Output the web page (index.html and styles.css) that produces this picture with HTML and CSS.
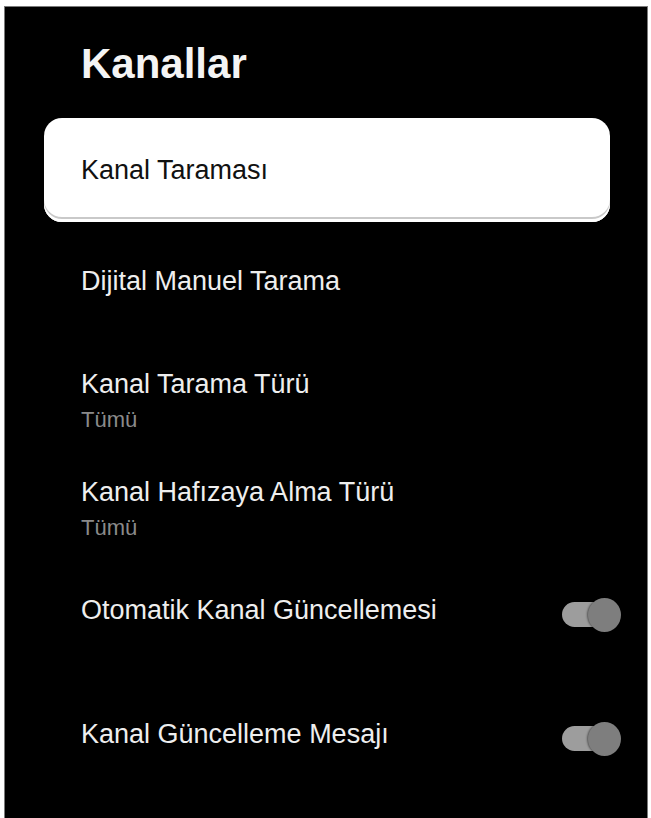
FILE: index.html
```html
<!DOCTYPE html>
<html lang="tr">
<head>
    <meta charset="UTF-8">
    <meta name="viewport" content="width=device-width, initial-scale=1.0">
    <title>Kanallar</title>
    <link rel="stylesheet" href="styles.css">
</head>
<body>
    <div class="panel">
        <h1 class="title">Kanallar</h1>

        <div class="card">
            <span class="label">Kanal Taraması</span>
        </div>

        <div class="row row-dijital">
            <span class="label">Dijital Manuel Tarama</span>
        </div>

        <div class="row row-tarama">
            <div class="text">
                <span class="label">Kanal Tarama Türü</span>
                <span class="sub">Tümü</span>
            </div>
        </div>

        <div class="row row-hafiza">
            <div class="text">
                <span class="label">Kanal Hafızaya Alma Türü</span>
                <span class="sub">Tümü</span>
            </div>
        </div>

        <div class="row row-otomatik">
            <span class="label">Otomatik Kanal Güncellemesi</span>
            <div class="toggle"><span class="track"></span><span class="knob"></span></div>
        </div>

        <div class="row row-mesaj">
            <span class="label">Kanal Güncelleme Mesajı</span>
            <div class="toggle"><span class="track"></span><span class="knob"></span></div>
        </div>
    </div>
</body>
</html>
```

FILE: styles.css
```css
* {
    box-sizing: border-box;
}

body {
    margin: 0;
    height: 818px;
    overflow: hidden;
    background: #fff;
    font-family: "Liberation Sans", Arial, sans-serif;
}

.panel {
    margin: 6px 0 0 4px;
    width: 644px;
    height: 812px;
    padding: 33px 37px 0 39px;
    background: #000;
    border: 1px solid #7a7a7a;
    border-bottom: none;
}

.title {
    margin: 0 0 30px;
    padding-left: 37px;
    height: 48px;
    font-size: 42px;
    line-height: 48px;
    font-weight: bold;
    color: #f4f4f4;
}

.card {
    display: flex;
    align-items: center;
    height: 104px;
    padding-left: 37px;
    background: #fff;
    border-radius: 18px;
    box-shadow: inset 0 -3px 0 #fff, inset 0 -5px 0 #c9c9c9;
}

.label {
    display: block;
    font-size: 27px;
    line-height: 30px;
    color: #eeeeee;
}

.card .label {
    color: #111;
}

.sub {
    display: block;
    margin-top: 8px;
    font-size: 22px;
    line-height: 26px;
    color: #8a8a8a;
}

.row {
    display: flex;
    align-items: center;
    justify-content: space-between;
    padding-left: 37px;
}

.row-dijital { height: 118px; }
.row-tarama { height: 122px; }
.row-hafiza { height: 94px; }
.row-otomatik { height: 108px; }
.row-mesaj { height: 140px; }

.toggle {
    position: relative;
    width: 59px;
    height: 33px;
    margin: 8px -11px 0 0;
    filter: blur(0.6px);
}

.track {
    position: absolute;
    left: 0;
    top: 4px;
    width: 50px;
    height: 25px;
    border-radius: 13px;
    background: #9d9d9d;
}

.knob {
    position: absolute;
    right: 0;
    top: 0;
    width: 33px;
    height: 34px;
    border-radius: 50%;
    background: #7e7e7e;
    box-shadow: -1px 0 2px rgba(0, 0, 0, 0.45);
}
```
